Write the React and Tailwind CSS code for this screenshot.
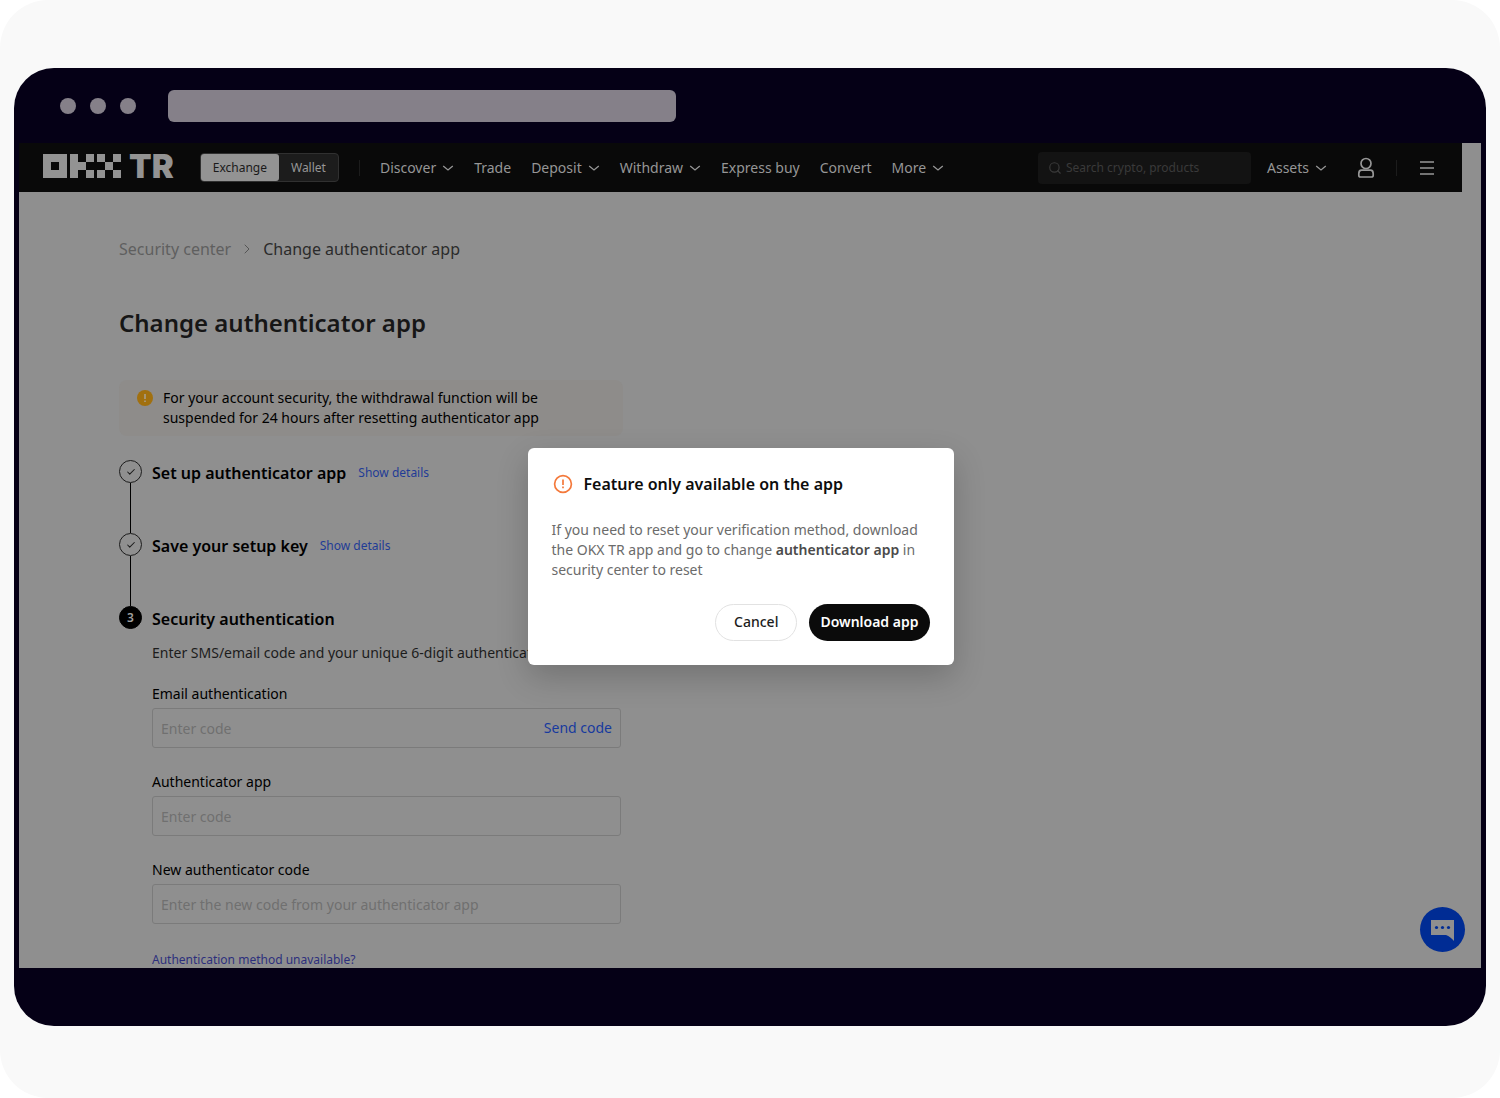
import React, { useState } from 'react';
import clsx from 'clsx';
import { Check, ChevronRight, Search } from 'lucide-react';

const navItems = [
  { label: 'Discover', menu: true },
  { label: 'Trade' },
  { label: 'Deposit', menu: true },
  { label: 'Withdraw', menu: true },
  { label: 'Express buy' },
  { label: 'Convert' },
  { label: 'More', menu: true },
];

const fields = [
  { id: 'email-code', label: 'Email authentication', placeholder: 'Enter code', action: 'Send code' },
  { id: 'app-code', label: 'Authenticator app', placeholder: 'Enter code' },
  { id: 'new-code', label: 'New authenticator code', placeholder: 'Enter the new code from your authenticator app' },
];

const Logo = () => (
  <a href="#home" aria-label="OKX TR" className="flex items-center gap-2 pb-[3px] text-[#939393]">
    <svg width="78" height="24" viewBox="0 0 78 24" fill="currentColor" shapeRendering="crispEdges">
      <path fillRule="evenodd" d="M0 0h24v24H0zM8 8v8h8V8z" />
      <path d="M27 0h8v24h-8zM35 8h8v8h-8zM43 0h8v8h-8zM43 16h8v8h-8z" />
      <path d="M54 0h8v8h-8zM70 0h8v8h-8zM62 8h8v8h-8zM54 16h8v8h-8zM70 16h8v8h-8z" />
    </svg>
    <span className="font-['Inter',sans-serif] text-[33px] leading-6 font-black">TR</span>
  </a>
);

const Caret = () => (
  <svg width="12" height="12" viewBox="0 0 12 12" fill="none" stroke="currentColor" strokeWidth="1.3">
    <path d="M1.200 4l4.800 4 4.800-4" />
  </svg>
);

const UserIcon = () => (
  <svg width="18" height="22" viewBox="0 0 18 22" fill="none" stroke="currentColor" strokeWidth="1.7">
    <circle cx="9" cy="6.5" r="5" />
    <path d="M4.5 13.2h9c1.6 0 2.7 1.6 2.7 3.6v1.4c0 1-.8 1.8-1.8 1.8H3.6c-1 0-1.8-.8-1.8-1.8v-1.4c0-2 1.100-3.600 2.700-3.600z" />
  </svg>
);

const Header = () => (
  <header className="mr-[19px] flex h-[49px] items-center bg-[#090909] pr-[25px] pl-6 text-sm text-[#969696]">
    <Logo />
    <div className="ml-[26px] flex h-[29px] rounded-[4px] border border-[#303030] bg-[#1c1c1c] text-xs">
      <button className="rounded-[3px] bg-[#939393] px-3 text-[#1a1a1a]">Exchange</button>
      <button className="px-3">Wallet</button>
    </div>
    <div className="ml-5 h-4 w-px bg-[#1c1c1c]" />

    <nav className="ml-5 flex items-center gap-5">
      {navItems.map((item) => (
        <a key={item.label} href="#nav" className="flex items-center gap-[6px] whitespace-nowrap">
          {item.label}
          {item.menu && <Caret />}
        </a>
      ))}
    </nav>

    <div className="ml-auto flex h-8 w-[213px] items-center gap-1 rounded-[4px] bg-[#131313] px-2.5 text-[#3a3a3a]">
      <Search size={14} strokeWidth={2} className="shrink-0" />
      <input
        type="search"
        aria-label="Search"
        placeholder="Search crypto, products"
        className="min-w-0 flex-1 bg-transparent text-xs outline-none placeholder:text-[#3a3a3a]"
      />
    </div>
    <a href="#assets" className="ml-4 flex items-center gap-[6px]">
      Assets
      <Caret />
    </a>
    <button aria-label="Account" className="ml-[30px]"><UserIcon /></button>
    <div className="ml-[21px] h-4 w-px bg-[#1c1c1c]" />
    <button aria-label="Menu" className="ml-5">
      <svg width="20" height="16" viewBox="0 0 20 16" fill="none" stroke="currentColor" strokeWidth="1.600">
        <path d="M3 2h14M3 8h14M3 14h14" />
      </svg>
    </button>
  </header>
);

const Step = ({ number, title, done, children }) => (
  <li className="flex gap-[10px]">
    <div className="flex w-[23px] shrink-0 flex-col items-center">
      <div className={clsx(
        "flex size-[23px] items-center justify-center rounded-full border text-xs font-semibold",
        done ? "border-[#1c1c1c] text-[#1c1c1c]" : "border-black bg-black text-[#a0a0a0]"
      )}>
        {done ? <Check size={10} strokeWidth={2.5} /> : number}
      </div>
      {done && <div className="h-[50px] w-px bg-black" />}
    </div>
    <div className="min-w-0 flex-1">
      <div className="flex h-[26px] items-center gap-3">
        <h2 className="text-base font-semibold text-black">{title}</h2>
        {done && <button className="text-xs text-[#1f3c96]">Show details</button>}
      </div>
      {children}
    </div>
  </li>
);

const Field = ({ id, label, placeholder, action }) => (
  <div>
    <label htmlFor={id} className="mb-1 block text-sm text-black">{label}</label>
    <div className="flex h-10 items-center rounded-[3px] border border-[#7b7b7b] px-2">
      <input
        id={id}
        placeholder={placeholder}
        className="min-w-0 flex-1 bg-transparent pt-0.5 text-sm outline-none placeholder:text-[#707070]"
      />
      {action && <button className="text-sm text-[#173a9e]">{action}</button>}
    </div>
  </div>
);

const Modal = ({ onClose }) => (
  <div className="absolute inset-0 flex items-center justify-center pt-px pr-[19px]">
    <div
      role="dialog"
      aria-labelledby="modal-title"
      className="w-[426px] rounded-md bg-white p-6 shadow-[0_12px_32px_rgba(0,0,0,0.2)]"
    >
      <div className="flex items-center gap-[10px]">
        <svg width="22" height="22" viewBox="0 0 22 22" fill="none" stroke="#f4793b" strokeWidth="1.700">
          <circle cx="11" cy="11" r="8.400" />
          <path d="M11 6.500v5.500M11 13.500v1.700" />
        </svg>
        <h2 id="modal-title" className="text-base font-semibold text-[#0d0d0d]">Feature only available on the app</h2>
      </div>
      <p className="mt-6 text-sm text-[#6b6b6b]">
        If you need to reset your verification method, download the OKX TR app and go to change{' '}
        <b className="font-semibold text-[#4a4a4a]">authenticator app</b> in security center to reset
      </p>
      <div className="mt-6 flex justify-end gap-3">
        <button onClick={onClose} className="h-[37px] rounded-full border border-[#e2e2e2] px-[18px] text-sm font-medium text-[#1c1c1c]">
          Cancel
        </button>
        <button className="h-[37px] rounded-full bg-[#0b0b0b] px-[11px] text-sm font-semibold text-white">Download app</button>
      </div>
    </div>
  </div>
);

export default function App() {
  const [open, setOpen] = useState(true);

  return (
    <div className="bg-white font-['Noto_Sans',sans-serif]">
      <div className="rounded-[48px] bg-[#f9f9f9] px-[14px] pt-[68px] pb-[72px]">
        <div className="rounded-[40px] bg-[#050016] px-[5px] pb-[58px]">
          {/* Browser bar */}
          <div className="flex h-[75px] items-center gap-[14px] pl-[41px]">
            <span className="size-4 rounded-full bg-[#858089]" />
            <span className="size-4 rounded-full bg-[#858089]" />
            <span className="size-4 rounded-full bg-[#858089]" />
            <div className="ml-[18px] h-8 w-[508px] rounded-md bg-[#858089]" />
          </div>

          <div className="relative bg-[#8f8f8f]">
            <Header />

            <main className="px-[100px] pt-[45px]">
              <nav className="flex items-center gap-2">
                <a href="#security" className="text-[#5f5f5f]">Security center</a>
                <ChevronRight size={16} strokeWidth={1.5} className="text-[#555]" />
                <span className="text-[#2b2b2b]">Change authenticator app</span>
              </nav>

              <h1 className="mt-[46px] text-2xl font-semibold text-[#161616]">Change authenticator app</h1>

              <div className="mt-[41px] flex max-w-[504px] gap-[10px] rounded-lg bg-[#8e8c8a] py-2 pr-10 pl-[18px]">
                <svg width="16" height="16" viewBox="0 0 16 16" className="mt-0.5 shrink-0">
                  <circle cx="8" cy="8" r="8" fill="#a1700f" />
                  <path d="M8 4v5M8 10.500v1.500" stroke="#a8a49c" strokeWidth="1.400" />
                </svg>
                <p className="max-w-[390px] text-sm text-black">
                  For your account security, the withdrawal function will be suspended for 24 hours after resetting authenticator app
                </p>
              </div>

              <ol className="mt-6">
                <Step title="Set up authenticator app" done />
                <Step title="Save your setup key" done />
                <Step number={3} title="Security authentication">
                  <p className="mt-[11px] text-sm text-[#1c1c1c]">
                    Enter SMS/email code and your unique 6-digit authenticator code
                  </p>
                  <form className="mt-[21px] flex max-w-[469px] flex-col gap-6">
                    {fields.map((field) => <Field key={field.id} {...field} />)}
                  </form>
                  <a href="#help" className="mt-7 block text-xs text-[#2d2f7d]">
                    Authentication method unavailable?
                  </a>
                </Step>
              </ol>
            </main>

            {open && <Modal onClose={() => setOpen(false)} />}

            {/* Support chat */}
            <button
              aria-label="Chat"
              className="absolute right-4 bottom-4 flex size-[45px] items-center justify-center rounded-full bg-[#002c94]"
            >
              <svg width="23" height="22" viewBox="0 0 23 22">
                <path d="M0 1h23v21c-2-2.500-5-5-8-6H0z" fill="#8f8f8f" />
                <g fill="#002c94">
                  <circle cx="5.500" cy="8.500" r="1.600" />
                  <circle cx="11.500" cy="8.500" r="1.600" />
                  <circle cx="17.500" cy="8.500" r="1.600" />
                </g>
              </svg>
            </button>
          </div>
        </div>
      </div>
    </div>
  );
}
